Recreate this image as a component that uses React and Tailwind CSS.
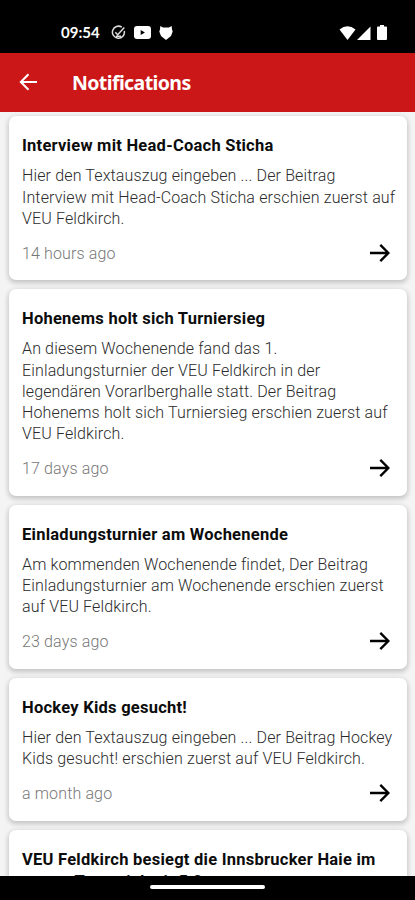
import React from 'react';

const notifications = [
  {
    title: ['Interview mit Head-Coach Sticha'],
    lines: [
      'Hier den Textauszug eingeben ... Der Beitrag',
      'Interview mit Head-Coach Sticha erschien zuerst auf',
      'VEU Feldkirch.',
    ],
    time: '14 hours ago',
  },
  {
    title: ['Hohenems holt sich Turniersieg'],
    lines: [
      'An diesem Wochenende fand das 1.',
      'Einladungsturnier der VEU Feldkirch in der',
      'legendären Vorarlberghalle statt. Der Beitrag',
      'Hohenems holt sich Turniersieg erschien zuerst auf',
      'VEU Feldkirch.',
    ],
    time: '17 days ago',
  },
  {
    title: ['Einladungsturnier am Wochenende'],
    lines: [
      'Am kommenden Wochenende findet, Der Beitrag',
      'Einladungsturnier am Wochenende erschien zuerst',
      'auf VEU Feldkirch.',
    ],
    time: '23 days ago',
  },
  {
    title: ['Hockey Kids gesucht!'],
    lines: [
      'Hier den Textauszug eingeben ... Der Beitrag Hockey',
      'Kids gesucht! erschien zuerst auf VEU Feldkirch.',
    ],
    time: 'a month ago',
  },
  {
    title: ['VEU Feldkirch besiegt die Innsbrucker Haie im', 'ersten Testspiel mit 5:2'],
    lines: [],
    time: '',
  },
];

function StatusBar() {
  return (
    <div className="h-[53px] shrink-0 bg-black pt-3 pl-[61px] pr-[28px] flex items-center text-white">
      <span className="w-[40px] font-['Lato'] text-[15px] leading-none font-bold whitespace-nowrap">09:54</span>
      <svg className="ml-[10px]" width="15" height="15" viewBox="0 0 15 15" fill="none" stroke="#ddd" strokeWidth="1.5">
        <path d="M10.8 2.2A6 6 0 1 0 13.3 6" />
        <path d="M4.3 7.2l2.4 2.5L13.3 2.5M5 11.2h5" />
      </svg>
      <svg className="ml-[8px]" width="17" height="13" viewBox="0 0 17 13">
        <rect width="17" height="13" rx="3" fill="#fff" />
        <path d="M6.7 4v5l4.2-2.5z" fill="#000" />
      </svg>
      <svg className="ml-[8px]" width="14" height="14" viewBox="0 0 14 14" fill="#fff">
        <path d="M1.3 0L4 1.5h6L12.700 0 13 3.500 13.700 5.500 12 10 7 14 2 10 .3 5.500 1 3.500z" />
      </svg>
      <div className="ml-auto flex items-center">
        <svg width="17" height="14" viewBox="0 0 17 14" fill="#fff">
          <path d="M.5 3.5Q8.500-3 16.500 3.500L8.500 14z" />
        </svg>
        <svg className="ml-px" width="14" height="14" viewBox="0 0 14 14" fill="#fff">
          <path d="M0 14L13.500.5V14z" />
        </svg>
        <svg className="ml-[6px]" width="10" height="15" viewBox="0 0 10 15" fill="#fff">
          <path d="M3 0h4v1.500h2q1 0 1 1V14q0 1-1 1H1q-1 0-1-1V2.500q0-1 1-1h2z" />
        </svg>
      </div>
    </div>
  );
}

function Header() {
  return (
    <div className="h-[58.5px] shrink-0 bg-[#cc1719] flex items-center pl-[19px] text-white">
      <svg width="18" height="18" viewBox="0 0 18 18" fill="none" stroke="currentColor" strokeWidth="2">
        <path d="M18 9H2M9.500 1.200L1.800 9l7.700 7.800" />
      </svg>
      <h1 className="ml-[35px] font-['Noto_Sans'] text-[19.5px] tracking-[-0.6px] font-bold whitespace-nowrap">Notifications</h1>
    </div>
  );
}

function Card({ item }) {
  return (
    <div className="shrink-0 rounded-[7px] bg-white pt-[19px] pl-[13px] pr-[17px] pb-[15.4px] shadow-[0_2px_5px_1px_rgba(0,0,0,0.2)] whitespace-nowrap">
      <h2 className="text-[16.5px] leading-[22px] tracking-[0.25px] font-bold text-[#0c0c0c]">
        {item.title.map((t) => (
          <span key={t} className="block">{t}</span>
        ))}
      </h2>
      <p className="mt-[8px] text-[16px] leading-[21.200px] tracking-[0.14px] font-light text-[#2b2b2b]">
        {item.lines.map((l) => (
          <span key={l} className="block">{l}</span>
        ))}
      </p>
      {item.time && (
        <div className="mt-[11px] h-[25px] flex items-center justify-between">
          <span className="pt-[2px] text-[16px] tracking-[0.14px] font-light text-[#777]">{item.time}</span>
          <svg width="20" height="18" viewBox="0 0 20 18" fill="none" stroke="#000" strokeWidth="2.400">
            <path d="M0 9h18M10.300.900L18.400 9l-8.100 8.100" />
          </svg>
        </div>
      )}
    </div>
  );
}

export default function App() {
  return (
    <div className="w-[415px] h-[900px] flex flex-col overflow-hidden bg-[#f4f4f4] font-['Roboto',sans-serif]">
      <StatusBar />
      <Header />
      <div className="flex-1 min-h-0 overflow-hidden flex flex-col gap-[9px] pt-[4.9px] pl-[9px] pr-[8px]">
        {notifications.map((n) => (
          <Card key={n.title[0]} item={n} />
        ))}
      </div>
      <div className="h-[24px] shrink-0 bg-black flex justify-center pt-[9px]">
        <div className="w-[115px] h-[4px] rounded-full bg-white" />
      </div>
    </div>
  );
}
